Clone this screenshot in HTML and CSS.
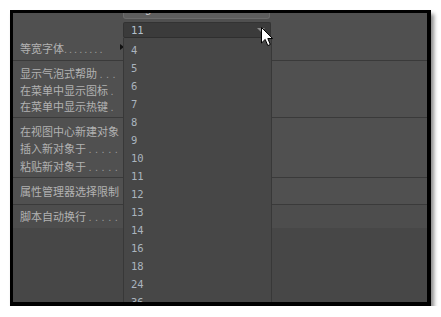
FILE: index.html
```html
<!DOCTYPE html>
<html lang="zh">
<head>
<meta charset="utf-8">
<link rel="stylesheet" href="styles.css">
</head>
<body>
<div class="frame">
  <div class="panel">
    <div class="group top">
      <div class="row">
        <span class="label">等宽字体<span class="dots dense">........</span></span>
        <span class="tri"></span>
      </div>
    </div>
    <div class="group g2">
      <div class="row"><span class="label">显示气泡式帮助 <span class="dots">...</span></span></div>
      <div class="row"><span class="label">在菜单中显示图标 <span class="dots">.</span></span></div>
      <div class="row"><span class="label">在菜单中显示热键 <span class="dots">.</span></span></div>
    </div>
    <div class="group g3">
      <div class="row"><span class="label">在视图中心新建对象</span></div>
      <div class="row"><span class="label">插入新对象于 <span class="dots">.....</span></span></div>
      <div class="row"><span class="label">粘贴新对象于 <span class="dots">.....</span></span></div>
    </div>
    <div class="group g4">
      <div class="row"><span class="label">属性管理器选择限制</span></div>
    </div>
    <div class="group g5">
      <div class="row"><span class="label">脚本自动换行 <span class="dots">.....</span></span></div>
    </div>
    <div class="rest"></div>

    <div class="popup">
      <div class="style-field">Regular</div>
      <div class="size-field"><span>11</span><span class="arrow"></span></div>
      <ul class="size-list">
        <li>4</li><li>5</li><li>6</li><li>7</li><li>8</li><li>9</li><li>10</li><li>11</li>
        <li>12</li><li>13</li><li>14</li><li>16</li><li>18</li><li>24</li><li>36</li>
      </ul>
    </div>

    <svg class="cursor" width="13" height="20" viewBox="0 0 13 20">
      <path d="M0.5 0.5 L0.5 16 L4.2 12.4 L6.8 18.6 L9.3 17.5 L6.8 11.5 L11.6 11.5 Z" fill="#ffffff" stroke="#000000" stroke-width="1" stroke-linejoin="miter"/>
    </svg>
  </div>
</div>
</body>
</html>
```

FILE: styles.css
```css
html, body {
  margin: 0;
  padding: 0;
  background: #ffffff;
}

.frame {
  margin: 10px 0 0 10px;
  width: 414px;
  height: 289px;
  border-style: solid;
  border-color: #000000;
  border-width: 3px 4px 4px 3px;
  box-shadow: 3px 4px 4px rgba(0, 0, 0, 0.45);
}

.panel {
  position: relative;
  overflow: hidden;
  width: 414px;
  height: 289px;
  background: #474747;
  display: flex;
  flex-direction: column;
  font-family: "Noto Sans CJK SC", "Noto Sans", sans-serif;
  font-size: 11px;
  color: #b2b2b2;
}

.group {
  background: #505050;
  border-top: 1px solid #3a3a3a;
  display: flex;
  flex-direction: column;
}

.group.top {
  border-top: none;
  height: 44px;
  padding-bottom: 3px;
  justify-content: flex-end;
}

.g2 {
  height: 57px;
  box-sizing: border-box;
  padding: 4px 0 2px;
}

.g2 .row {
  height: 17px;
}

.g3 {
  height: 60px;
  box-sizing: border-box;
  padding: 4px 0 2px;
}

.g3 .row {
  height: 18px;
}

.g4 {
  height: 26px;
}

.g4 .row {
  height: 26px;
}

.g5 {
  height: 23px;
  background: #4d4d4d;
}

.g5 .row {
  height: 23px;
}

.top .row {
  height: 17px;
}

.row {
  display: flex;
  align-items: center;
  padding-left: 7px;
  white-space: nowrap;
}

.label {
  width: 101px;
  overflow: hidden;
  line-height: 14px;
}

.dots {
  font-family: "Liberation Sans", sans-serif;
  letter-spacing: 3.5px;
  color: #9a9a9a;
}

.dots.dense {
  letter-spacing: 2px;
}

.tri {
  width: 0;
  height: 0;
  border-top: 3px solid transparent;
  border-bottom: 3px solid transparent;
  border-left: 4px solid #111111;
  margin-left: -1px;
  margin-top: -3px;
}

.rest {
  flex: 1;
  background: #474747;
}

.popup {
  position: absolute;
  left: 110px;
  top: -8px;
  width: 149px;
  display: flex;
  flex-direction: column;
}

.style-field {
  box-sizing: border-box;
  width: 147px;
  height: 14px;
  background: #5e5e5e;
  border: 1px solid #6c6c6c;
  border-top: none;
  border-radius: 0 0 3px 3px;
  font-family: "Liberation Sans", sans-serif;
  font-size: 11px;
  line-height: 8px;
  padding-left: 7px;
  color: #cfcfcf;
  overflow: hidden;
}

.size-field {
  box-sizing: border-box;
  margin-top: 3px;
  width: 148px;
  height: 16px;
  background: #3b3b3b;
  border: 1px solid #333333;
  border-bottom-color: #2f2f2f;
  border-radius: 2px;
  display: flex;
  align-items: center;
  justify-content: space-between;
  padding: 0 5px 0 7px;
  font-family: "DejaVu Sans Mono", monospace;
  font-size: 10.5px;
  color: #b4c0cc;
}

.arrow {
  width: 0;
  height: 0;
  border-left: 4px solid transparent;
  border-right: 4px solid transparent;
  border-top: 4px solid #8a8a8a;
}

.size-list {
  list-style: none;
  margin: 0;
  box-sizing: border-box;
  width: 149px;
  height: 290px;
  padding: 3px 0 0 7px;
  background: #474747;
  border-left: 1px solid #383838;
  border-right: 1px solid #383838;
  font-family: "DejaVu Sans Mono", monospace;
  font-size: 10.5px;
  color: #aab4be;
}

.size-list li {
  height: 18px;
  line-height: 18px;
}

.cursor {
  position: absolute;
  left: 248px;
  top: 14px;
}
```
